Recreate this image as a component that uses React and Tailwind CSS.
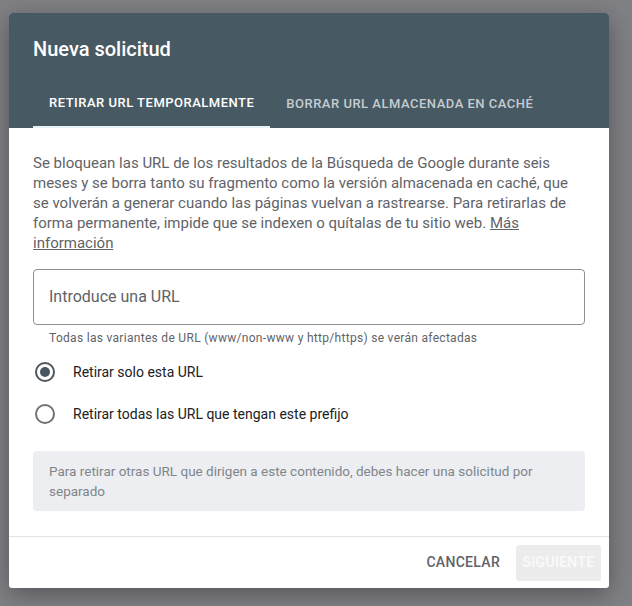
import React from 'react';

const font = { fontFamily: 'Roboto, "Noto Sans", Arial, sans-serif' };

const Radio = ({ checked, label }) => (
  <label className="flex items-center h-[42px]">
    <span className="w-[24px] flex justify-center">
      <span
        className={
          'w-[20px] h-[20px] rounded-full border-2 flex items-center justify-center ' +
          (checked ? 'border-[#4f565c]' : 'border-[#6f7377]')
        }
      >
        {checked && <span className="w-[10px] h-[10px] rounded-full bg-[#46575f]" />}
      </span>
    </span>
    <span className="ml-[16px] text-[14px] text-[#202124]">{label}</span>
  </label>
);

export default function App() {
  return (
    <div className="w-[632px] h-[606px] bg-[#808185] pt-[13px] pl-[9px] overflow-hidden" style={font}>
      <div className="w-[600px] h-[575px] bg-white rounded-[3px] shadow-[0_6px_24px_rgba(0,0,0,0.35)] flex flex-col overflow-hidden">
        {/* header */}
        <div className="bg-[#475a64] px-[24px] pt-[24px]">
          <h1 className="text-[20px] leading-[24px] font-medium text-white">Nueva solicitud</h1>
          <div className="flex mt-[19px]">
            <div className="px-[16px] h-[48px] flex items-center border-b-2 border-[#e6f2f5] text-[13px] font-medium tracking-[0.5px] text-white">
              RETIRAR URL TEMPORALMENTE
            </div>
            <div className="px-[16px] h-[48px] flex items-center text-[13px] font-medium tracking-[0.5px] text-[#c5ccd0]">
              BORRAR URL ALMACENADA EN CACHÉ
            </div>
          </div>
        </div>

        {/* body */}
        <div className="px-[24px] pt-[25px] flex-1">
          <p className="text-[15px] leading-[20px] text-[#5f6368] w-[552px]">
            Se bloquean las URL de los resultados de la Búsqueda de Google durante seis meses y se borra tanto su
            fragmento como la versión almacenada en caché, que se volverán a generar cuando las páginas vuelvan a
            rastrearse. Para retirarlas de forma permanente, impide que se indexen o quítalas de tu sitio web.{' '}
            <a className="underline text-[#5f6368]">Más información</a>
          </p>

          <div className="mt-[16px] h-[56px] border border-[#8d9094] rounded-[4px] flex items-center px-[15px]">
            <span className="text-[16px] text-[#5f6368]">Introduce una URL</span>
          </div>
          <p className="mt-[5px] px-[16px] text-[12px] leading-[16px] tracking-[0.3px] text-[#5f6368]">
            Todas las variantes de URL (www/non-www y http/https) se verán afectadas
          </p>

          <div className="mt-[5px]">
            <Radio checked label="Retirar solo esta URL" />
            <Radio label="Retirar todas las URL que tengan este prefijo" />
          </div>

          <div className="mt-[16px] bg-[#eceef1] rounded-[4px] px-[16px] py-[10px] text-[13.5px] leading-[20px] text-[#80868b]">
            Para retirar otras URL que dirigen a este contenido, debes hacer una solicitud por separado
          </div>
        </div>

        {/* footer */}
        <div className="border-t border-[#e3e3e3] h-[52px] flex items-center justify-end gap-[8px] pr-[8px]">
          <button className="h-[36px] px-[8px] text-[14px] font-medium tracking-[0.3px] text-[#5f6368]">CANCELAR</button>
          <button className="h-[36px] w-[85px] rounded-[3px] bg-[#ececec] text-[14px] font-medium tracking-[0.3px] text-[#fafafa]">
            SIGUIENTE
          </button>
        </div>
      </div>
    </div>
  );
}
